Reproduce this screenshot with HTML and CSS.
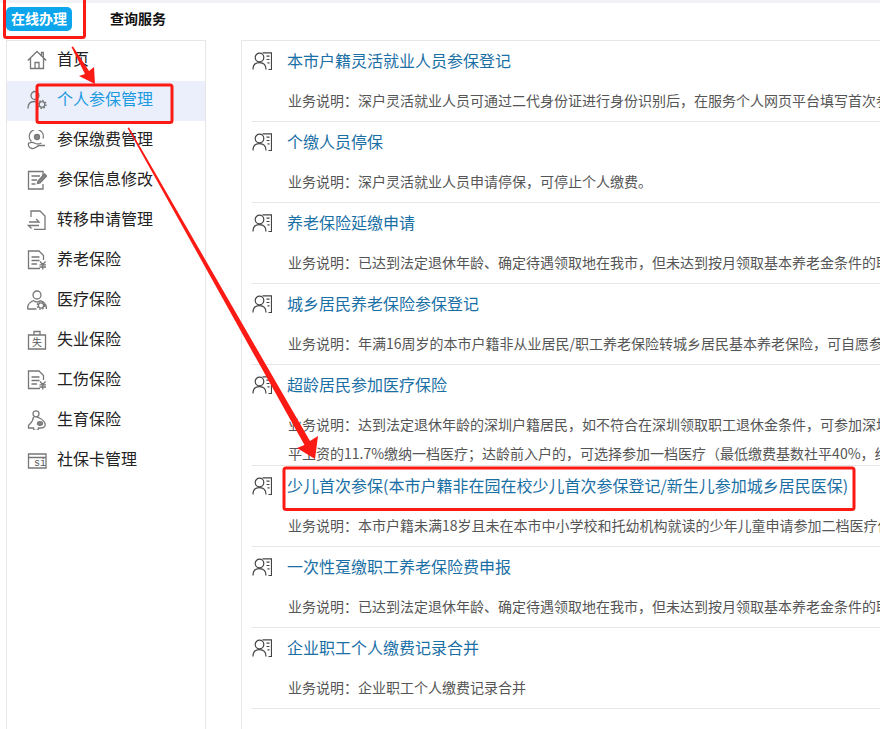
FILE: index.html
```html
<!DOCTYPE html>
<html lang="zh-CN">
<head>
<meta charset="utf-8">
<title>在线办理</title>
<link rel="stylesheet" href="styles.css">
</head>
<body>
<svg class="defs" width="0" height="0" aria-hidden="true">
  <symbol id="person" viewBox="0 0 20 18">
    <circle cx="7.500" cy="5.500" r="4.300"/>
    <path d="M1 17.500c0-4.400 2.700-6.900 6.500-6.900s6.500 2.500 6.500 6.900"/>
    <path d="M10.500.8h9v16.700h-3M14.500 4.200h3M14.500 7.500h3M15.500 10.800h2"/>
  </symbol>
  <symbol id="doc" viewBox="0 0 20 20">
    <path d="M13 18.500H1.500V1h10.500l4.500 4.500V10M4.500 7h8M4.500 10.500h8M4.500 14h5.500"/>
    <path d="M13 11.500l2.800 3 2.800-3M12.500 14.800h6.500M12.500 17h6.500M15.800 14.500v5"/>
  </symbol>
</svg>
<header class="tabs">
  <a class="tab tab-on">在线办理</a>
  <a class="tab">查询服务</a>
</header>
<div class="layout">
  <nav class="side">
    <a class="item"><svg class="ico" viewBox="0 0 20 20"><path d="M.8 10.500 10 1.500l9.200 9M3.500 8v10.500h13V8M8 18.500v-6h4v6M14.500 6V2.500h1.800v5"/></svg>首页</a>
    <a class="item item-on"><svg class="ico" viewBox="0 0 20 20"><circle cx="8" cy="5.500" r="4"/><path d="M1 18.500c0-4.500 2.500-7 6-7 1 0 2 .2 3 .7"/><circle cx="15" cy="14.500" r="2.800"/><circle class="ico-gear" cx="15" cy="14.500" r="4"/></svg>个人参保管理</a>
    <a class="item"><svg class="ico" viewBox="0 0 20 20"><path d="M4.500 11.500A7 7 0 1 1 16 8.500"/><circle class="ico-fill" cx="10" cy="7" r="2.500"/><path d="M2 12.500c-1.500 2-.5 5.500 3 6 3.500.5 4.500-2.500 7-3h6M2.500 13c2-1.500 4-.5 6 .5 2 .8 4 .5 6-.5"/></svg>参保缴费管理</a>
    <a class="item"><svg class="ico" viewBox="0 0 20 20"><path d="M16 7V1.500H1.500v17.500H16v-5M4.500 6h8.500M4.500 10h5.500M4.500 14h4"/><path class="ico-fill" d="M10.500 13.500l.5-2.500 6.500-7 2 2-6.500 7z"/></svg>参保信息修改</a>
    <a class="item"><svg class="ico" viewBox="0 0 20 20"><path d="M4 7V1h9l5 5v13.500H7M2 12h10l-2.800-3M12 15.500H1.500l3 3"/></svg>转移申请管理</a>
    <a class="item"><svg class="ico"><use href="#doc"/></svg>养老保险</a>
    <a class="item"><svg class="ico" viewBox="0 0 20 20"><circle cx="10" cy="5" r="4"/><path d="M.5 19c0-5 3-7.500 6.500-8.500M19.500 19c0-5-3-7.500-6.500-8.500M7 10.500c1 2 5 2 6 0M.5 19h9"/><circle cx="14" cy="15.500" r="2.600"/><circle class="ico-gear" cx="14" cy="15.500" r="3.800"/></svg>医疗保险</a>
    <a class="item"><svg class="ico" viewBox="0 0 20 20"><path d="M1.500 5h17v14h-17zM7 5V1.500h6V5"/><text class="ico-text" x="10" y="16" text-anchor="middle">失</text></svg>失业保险</a>
    <a class="item"><svg class="ico"><use href="#doc"/></svg>工伤保险</a>
    <a class="item"><svg class="ico" viewBox="0 0 20 20"><circle cx="9" cy="3.800" r="3"/><path d="M6.500 7C6 12 3 14 1.500 15.500v2.500h5a2.500 2.500 0 0 0 5 0H14c3.500 0 4.500-2 4-4.500-1-3.500-5-5.500-9-7"/><ellipse class="ico-fill" cx="13" cy="13.500" rx="2.500" ry="1.800"/></svg>生育保险</a>
    <a class="item"><svg class="ico ico-card" viewBox="0 0 20 16"><path d="M1.500 1h17.500v14H1.500zM1.500 4.500h17.500"/><text class="ico-si" x="13" y="13.200" text-anchor="middle">si</text></svg>社保卡管理</a>
  </nav>
  <main class="main">
    <section class="row">
      <h3 class="title"><svg class="pic"><use href="#person"/></svg>本市户籍灵活就业人员参保登记</h3>
      <p class="desc">业务说明<span class="pn">：</span>深户灵活就业人员可通过二代身份证进行身份识别后<span class="pn">，</span>在服务个人网页平台填写首次参保</p>
    </section>
    <section class="row">
      <h3 class="title"><svg class="pic"><use href="#person"/></svg>个缴人员停保</h3>
      <p class="desc">业务说明<span class="pn">：</span>深户灵活就业人员申请停保<span class="pn">，</span>可停止个人缴费。</p>
    </section>
    <section class="row">
      <h3 class="title"><svg class="pic"><use href="#person"/></svg>养老保险延缴申请</h3>
      <p class="desc">业务说明<span class="pn">：</span>已达到法定退休年龄、确定待遇领取地在我市<span class="pn">，</span>但未达到按月领取基本养老金条件的职</p>
    </section>
    <section class="row">
      <h3 class="title"><svg class="pic"><use href="#person"/></svg>城乡居民养老保险参保登记</h3>
      <p class="desc">业务说明<span class="pn">：</span>年满16周岁的本市户籍非从业居民/职工养老保险转城乡居民基本养老保险<span class="pn">，</span>可自愿参</p>
    </section>
    <section class="row">
      <h3 class="title"><svg class="pic"><use href="#person"/></svg>超龄居民参加医疗保险</h3>
      <p class="desc">业务说明<span class="pn">：</span>达到法定退休年龄的深圳户籍居民<span class="pn">，</span>如不符合在深圳领取职工退休金条件<span class="pn">，</span>可参加深圳</p>
      <p class="desc desc-more">平工资的11.7%缴纳一档医疗<span class="pn">；</span>达龄前入户的<span class="pn">，</span>可选择参加一档医疗（最低缴费基数社平40%<span class="pn">，</span>线</p>
    </section>
    <section class="row">
      <h3 class="title"><svg class="pic"><use href="#person"/></svg>少儿首次参保(本市户籍非在园在校少儿首次参保登记/新生儿参加城乡居民医保)</h3>
      <p class="desc">业务说明<span class="pn">：</span>本市户籍未满18岁且未在本市中小学校和托幼机构就读的少年儿童申请参加二档医疗保</p>
    </section>
    <section class="row">
      <h3 class="title"><svg class="pic"><use href="#person"/></svg>一次性趸缴职工养老保险费申报</h3>
      <p class="desc">业务说明<span class="pn">：</span>已达到法定退休年龄、确定待遇领取地在我市<span class="pn">，</span>但未达到按月领取基本养老金条件的职</p>
    </section>
    <section class="row">
      <h3 class="title"><svg class="pic"><use href="#person"/></svg>企业职工个人缴费记录合并</h3>
      <p class="desc">业务说明<span class="pn">：</span>企业职工个人缴费记录合并</p>
    </section>
  </main>
</div>
<svg class="marks" width="880" height="729" viewBox="0 0 880 729" aria-hidden="true">
  <rect class="box" x="4.500" y="-4" width="80" height="41.500" rx="2"/>
  <rect class="box" x="37" y="85" width="135" height="37.500" rx="2"/>
  <rect class="box" x="284" y="468" width="570" height="41.500" rx="2"/>
  <polygon class="arrow" points="71.500,47 73,46.500 89,71 94,67 95,84 79,76 85,74"/>
  <polygon class="arrow" points="127.500,128 129,127.500 310,441 318,436 315,459 297,448 304.500,445"/>
</svg>
</body>
</html>
```

FILE: styles.css
```css
* { box-sizing: border-box; }
html, body { margin: 0; padding: 0; }
body {
  width: 880px;
  height: 729px;
  overflow: hidden;
  background: #fff;
  position: relative;
  font-family: "Noto Sans CJK SC", "Liberation Sans", sans-serif;
}
.defs { position: absolute; }
.tabs {
  height: 40px;
  padding: 7px 0 0 6px;
  display: flex;
  gap: 38px;
  align-items: flex-start;
  background: linear-gradient(#f1f2f5 0, #f1f2f5 3px, #fff 3px);
}
.tab {
  height: 24px;
  line-height: 22px;
  font-size: 14px;
  font-weight: 700;
  color: #111;
}
.tab-on {
  width: 66px;
  text-align: center;
  background: #0da5ec;
  color: #fff;
  border-radius: 5px;
}
.layout { display: flex; height: 689px; padding-left: 6px; gap: 35px; }
.side {
  width: 200px;
  flex: none;
  border: 1px solid #e6e6e6;
  border-bottom: 0;
}
.item {
  height: 40px;
  line-height: 34px;
  font-size: 16px;
  color: #222;
  display: flex;
  align-items: flex-start;
  padding-left: 20px;
}
.item-on { background: #ebeffc; color: #1c9ae0; }
.ico {
  width: 20px;
  height: 20px;
  margin-top: 9px;
  margin-right: 10px;
  flex: none;
  fill: none;
  stroke: #777;
  stroke-width: 1.300;
}
.ico-card { height: 16px; margin-top: 12px; }
.ico-text { font-size: 10px; fill: #555; stroke: none; }
.ico-si { font-size: 10px; fill: #555; stroke: none; font-family: "Liberation Mono", monospace; }
.ico-fill { fill: #888; }
.ico-gear { stroke-dasharray: 1.500 1.600; stroke-width: 1.400; }
.main {
  flex: 1;
  min-width: 0;
  border-left: 1px solid #e6e6e6;
  border-top: 1px solid #e6e6e6;
  padding-left: 10px;
  overflow: hidden;
}
.row {
  padding-top: 6px;
  border-bottom: 1px solid #e6e6e6;
  height: 81px;
}
.row:nth-child(5) { height: 101px; }
.title {
  margin: 0;
  height: 26px;
  line-height: 26px;
  font-size: 16px;
  font-weight: 400;
  color: #1a6fa5;
  white-space: nowrap;
  display: flex;
  align-items: center;
}
.pic {
  width: 20px;
  height: 18px;
  margin-top: 2px;
  margin-right: 15px;
  flex: none;
  fill: none;
  stroke: #444;
  stroke-width: 1.200;
}
.desc {
  margin: 17px 0 0 36px;
  line-height: 20px;
  font-size: 14px;
  color: #555;
  white-space: nowrap;
}
.desc-more { margin-top: 9px; }
.pn { font-family: "Noto Sans CJK TC", sans-serif; }
.marks { position: absolute; left: 0; top: 0; pointer-events: none; }
.box { fill: none; stroke: #fb1a14; stroke-width: 3; }
.arrow { fill: #fb1a14; }
```
